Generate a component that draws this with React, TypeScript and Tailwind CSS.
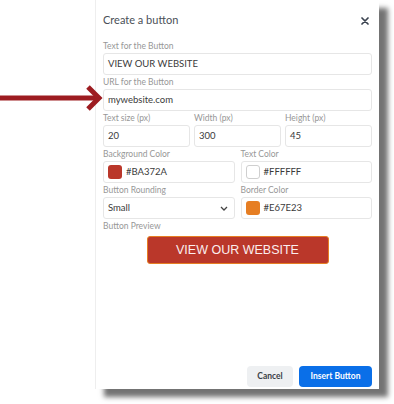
import React from "react";

const ui = { fontFamily: 'Lato, "Open Sans", sans-serif' };

function Label({ children }: { children: React.ReactNode }) {
  return <div className="h-[13px] text-[8.5px] leading-[12px] text-[#979797]">{children}</div>;
}

function Field({ children }: { children: React.ReactNode }) {
  return (
    <div className="h-[22px] flex items-center px-[4px] rounded-[3px] border border-[#e6e6e6] bg-white text-[9.5px] text-[#3a3a3a]">
      {children}
    </div>
  );
}

function ColorField({ color, value, light }: { color: string; value: string; light?: boolean }) {
  return (
    <div className="h-[22px] flex items-center gap-[4px] px-[4px] rounded-[3px] border border-[#e6e6e6] bg-white text-[9.5px] text-[#3a3a3a]">
      <span
        className={light ? "w-[14px] h-[14px] rounded-[3px] border border-[#cfcfcf]" : "w-[14px] h-[14px] rounded-[3px]"}
        style={{ background: color }}
      />
      <span>{value}</span>
    </div>
  );
}

export default function App() {
  return (
    <div className="relative w-[394px] h-[404px] bg-white overflow-hidden" style={ui}>
      {/* red pointer arrow */}
      <svg className="absolute left-0 top-[84px]" width="106" height="30" viewBox="0 0 106 30">
        <line x1="0" y1="14" x2="97" y2="14" stroke="#9d1c21" strokeWidth="5" />
        <polyline points="88,3 99,14 88,25" fill="none" stroke="#9d1c21" strokeWidth="5" strokeLinejoin="miter" />
      </svg>

      <div className="ml-[95px] w-[284px] h-[389px] flex flex-col bg-white border-l border-[#eeeeee] shadow-[9px_8px_5px_rgba(0,0,0,0.55)]">
        <div className="flex items-center justify-between pl-[7px] pr-[10px] pt-[11px] h-[29px]">
          <span className="text-[11px] leading-[18px] text-[#4a4f57]">Create a button</span>
          <svg width="8" height="8" viewBox="0 0 8 8" className="mt-[1px]">
            <path d="M1 1 L7 7 M7 1 L1 7" stroke="#3b4350" strokeWidth="1.7" strokeLinecap="round" />
          </svg>
        </div>

        <div className="px-[7px] mt-[11px] flex flex-col">
          <Label>Text for the Button</Label>
          <Field>VIEW OUR WEBSITE</Field>
          <div className="h-[1px]" />
          <Label>URL for the Button</Label>
          <Field>mywebsite.com</Field>
          <div className="h-[1px]" />
          <div className="grid grid-cols-3 gap-x-[4px]">
            <div>
              <Label>Text size (px)</Label>
              <Field>20</Field>
            </div>
            <div>
              <Label>Width (px)</Label>
              <Field>300</Field>
            </div>
            <div>
              <Label>Height (px)</Label>
              <Field>45</Field>
            </div>
          </div>
          <div className="h-[1px]" />
          <div className="grid grid-cols-2 gap-x-[6px]">
            <div>
              <Label>Background Color</Label>
              <ColorField color="#BA372A" value="#BA372A" />
            </div>
            <div>
              <Label>Text Color</Label>
              <ColorField color="#FFFFFF" value="#FFFFFF" light />
            </div>
          </div>
          <div className="h-[1px]" />
          <div className="grid grid-cols-2 gap-x-[6px]">
            <div>
              <Label>Button Rounding</Label>
              <div className="h-[22px] flex items-center justify-between px-[4px] rounded-[3px] border border-[#e6e6e6] bg-white text-[9.5px] text-[#3a3a3a]">
                <span>Small</span>
                <svg width="8" height="5" viewBox="0 0 8 5" className="mr-[2px]">
                  <path d="M1 1 L4 4 L7 1" fill="none" stroke="#444" strokeWidth="1.3" />
                </svg>
              </div>
            </div>
            <div>
              <Label>Border Color</Label>
              <ColorField color="#E67E23" value="#E67E23" />
            </div>
          </div>
          <div className="h-[1px]" />
          <Label>Button Preview</Label>
          <div className="mt-[3px] flex justify-center">
            <div
              className="w-[182px] h-[28px] flex items-center justify-center rounded-[3px] border border-[#E67E23] bg-[#BA372A] text-[#fbeeee] text-[12.5px]"
              style={{ fontFamily: '"Liberation Sans", Arial, sans-serif' }}
            >
              VIEW OUR WEBSITE
            </div>
          </div>
        </div>

        <div className="mt-auto flex justify-end gap-[6px] pr-[7px] pb-[2px]">
          <div className="w-[46px] h-[21px] flex items-center justify-center rounded-[4px] bg-[#eef0f2] text-[8.5px] font-bold text-[#3a3f47]">
            Cancel
          </div>
          <div className="w-[73px] h-[21px] flex items-center justify-center rounded-[4px] bg-[#0a6fe8] text-[8.5px] font-bold text-white">
            Insert Button
          </div>
        </div>
      </div>
    </div>
  );
}
